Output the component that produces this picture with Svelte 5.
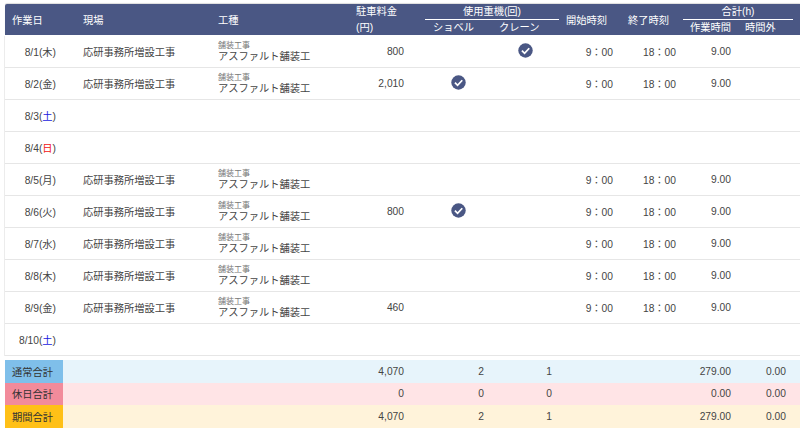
<script>
  const site = '応研事務所増設工事'
  const days = [
    { day: '8/1', wd: '木', work: true, fee: '800', crane: true },
    { day: '8/2', wd: '金', work: true, fee: '2,010', shovel: true },
    { day: '8/3', wd: '土', cls: 'sat' },
    { day: '8/4', wd: '日', cls: 'sun' },
    { day: '8/5', wd: '月', work: true },
    { day: '8/6', wd: '火', work: true, fee: '800', shovel: true },
    { day: '8/7', wd: '水', work: true },
    { day: '8/8', wd: '木', work: true },
    { day: '8/9', wd: '金', work: true, fee: '460' },
    { day: '8/10', wd: '土', cls: 'sat' }
  ]
  const totals = [
    { label: '通常合計', cls: 'normal', fee: '4,070', shovel: '2', crane: '1', hours: '279.00', extra: '0.00' },
    { label: '休日合計', cls: 'holiday', fee: '0', shovel: '0', crane: '0', hours: '0.00', extra: '0.00' },
    { label: '期間合計', cls: 'period', fee: '4,070', shovel: '2', crane: '1', hours: '279.00', extra: '0.00' }
  ]
</script>

{#snippet check()}
  <svg class="check" viewBox="0 0 16 16" width="15" height="15">
    <circle cx="8" cy="8" r="7.7" fill="#4a5784" />
    <path d="M4.2 8.2 L7 11 L12 5.6" fill="none" stroke="#fff" stroke-width="1.9" />
  </svg>
{/snippet}

<div class="page">
  <div class="head">
    <div class="c-day h">作業日</div>
    <div class="c-site h">現場</div>
    <div class="c-kind h">工種</div>
    <div class="c-fee h fee-h"><span>駐車料金</span><span>(円)</span></div>
    <div class="group machines">
      <div class="g-top">使用重機(回)</div>
      <div class="g-sub"><span class="c-shovel">ショベル</span><span class="c-crane">クレーン</span></div>
    </div>
    <div class="c-start h">開始時刻</div>
    <div class="c-end h">終了時刻</div>
    <div class="group sum">
      <div class="g-top">合計(h)</div>
      <div class="g-sub"><span class="c-hours">作業時間</span><span class="c-extra">時間外</span></div>
    </div>
  </div>

  <div class="rows">
    {#each days as d}
      <div class="row">
        <div class="c-day date">{d.day}(<span class={d.cls}>{d.wd}</span>)</div>
        {#if d.work}
          <div class="c-site">{site}</div>
          <div class="c-kind kind">
            <small>舗装工事</small>
            <span>アスファルト舗装工</span>
          </div>
          <div class="c-fee num">{d.fee ?? ''}</div>
          <div class="c-shovel mark">{#if d.shovel}{@render check()}{/if}</div>
          <div class="c-crane mark">{#if d.crane}{@render check()}{/if}</div>
          <div class="c-start time">9：00</div>
          <div class="c-end time">18：00</div>
          <div class="c-hours time">9.00</div>
        {/if}
      </div>
    {/each}
  </div>

  <div class="totals">
    {#each totals as t}
      <div class="total {t.cls}">
        <div class="t-label">{t.label}</div>
        <div class="t-fee">{t.fee}</div>
        <div class="t-shovel">{t.shovel}</div>
        <div class="t-crane">{t.crane}</div>
        <div class="t-hours">{t.hours}</div>
        <div class="t-extra">{t.extra}</div>
      </div>
    {/each}
  </div>
</div>

<style>
  :global(body) {
    margin: 0;
    background: #fff;
    overflow: hidden;
  }
  .page {
    width: 800px;
    height: 428px;
    box-sizing: border-box;
    padding: 4px 0 0 5px;
    font-family: "Liberation Sans", "Noto Sans CJK JP", sans-serif;
    font-size: 10.25px;
    color: #444;
    overflow: hidden;
  }
  .head {
    display: flex;
    height: 31px;
    background: #4a5784;
    color: #fff;
    border-top-left-radius: 2px;
    box-shadow: 0 -1px 1px #ddd;
  }
  .h {
    display: flex;
    align-items: center;
  }
  .c-day, .c-site, .c-kind, .c-fee, .c-shovel, .c-crane, .c-start, .c-end, .c-hours, .c-extra {
    flex: none;
    box-sizing: border-box;
  }
  .c-day { width: 64px; padding-left: 7px; }
  .c-site { width: 135px; padding-left: 14px; }
  .c-kind { width: 130px; padding-left: 14px; }
  .c-fee { width: 91px; }
  .c-shovel { width: 67px; padding-left: 8px; }
  .c-crane { width: 67px; padding-left: 7px; }
  .c-start { width: 62px; padding-left: 7px; }
  .c-end { width: 62px; padding-left: 7px; }
  .c-hours { width: 55px; padding-left: 7px; }
  .c-extra { width: 55px; padding-left: 7px; }
  .fee-h {
    flex-direction: column;
    align-items: flex-start;
    justify-content: center;
    padding-left: 22px;
    line-height: 16px;
  }
  .group {
    flex: none;
    display: flex;
    flex-direction: column;
  }
  .machines { width: 134px; }
  .sum { width: 110px; }
  .g-top {
    height: 15px;
    line-height: 15px;
    text-align: center;
    border-bottom: 1px solid #fff;
  }
  .g-sub {
    display: flex;
    line-height: 15px;
  }
  .rows {
    margin: 1px 0 0 -1px;
    border-left: 1px solid #ececec;
  }
  .row {
    display: flex;
    align-items: center;
    height: 32px;
    box-sizing: border-box;
    border-bottom: 1px solid #e6e6e6;
  }
  .date {
    text-align: right;
    padding: 0 13px 0 0;
  }
  .sat { color: #1a1adf; }
  .sun { color: #f01414; }
  .kind {
    display: flex;
    flex-direction: column;
    gap: 1px;
    line-height: 12px;
  }
  .kind small {
    font-size: 8px;
    line-height: 9px;
    color: #777;
  }
  .num { text-align: right; padding-right: 21px; }
  .mark {
    display: flex;
    justify-content: center;
    padding: 0 0 3px;
  }
  .time { text-align: right; padding: 0 8px 0 0; }
  .c-end.time, .c-hours.time { padding-right: 7px; }
  .totals { margin-top: 4px; }
  .total {
    display: flex;
    align-items: center;
    height: 22.67px;
  }
  .t-label {
    width: 58px;
    height: 100%;
    box-sizing: border-box;
    padding-left: 7px;
    display: flex;
    align-items: center;
    color: #333;
  }
  .t-fee { width: 341px; text-align: right; }
  .t-shovel { width: 80px; text-align: right; }
  .t-crane { width: 68px; text-align: right; }
  .t-hours { width: 179px; text-align: right; }
  .t-extra { width: 55px; text-align: right; }
  .normal { background: #e7f4fb; }
  .normal .t-label { background: #7fbfea; }
  .holiday { background: #ffe4e6; }
  .holiday .t-label { background: #f28b9b; }
  .period { background: #fff3da; }
  .period .t-label { background: #ffc017; }
</style>
